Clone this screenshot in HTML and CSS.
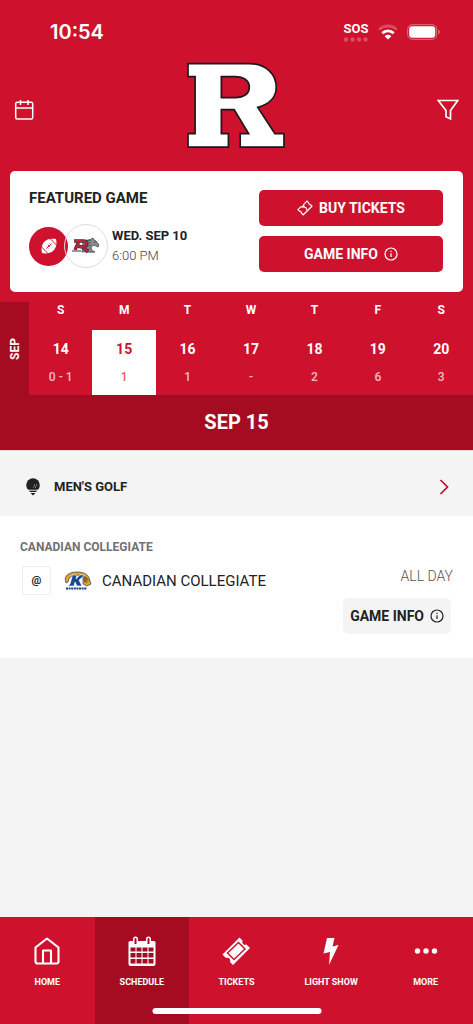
FILE: index.html
```html
<!DOCTYPE html>
<html lang="en">
<head>
    <meta charset="UTF-8">
    <meta name="viewport" content="width=device-width, initial-scale=1.0">
    <title>Schedule</title>
    <link rel="stylesheet" href="styles.css">
</head>
<body>

    <!-- Status bar -->
    <div class="status-bar">
        <span class="time">10:54</span>
        <div class="status-icons">
            <div class="sos">
                <span>SOS</span>
                <svg width="26" height="5" viewBox="0 0 26 5" fill="#fff" opacity="0.25"><circle cx="3" cy="2.5" r="2.2"/><circle cx="9.5" cy="2.5" r="2.2"/><circle cx="16" cy="2.5" r="2.2"/><circle cx="22.5" cy="2.5" r="2.2"/></svg>
            </div>
            <svg width="20" height="16" viewBox="0 0 20 16" fill="none" stroke="#fff" stroke-width="2.8">
                <path d="M1.2 5.6a12.5 12.5 0 0 1 17.6 0" opacity="0.25"/>
                <path d="M4.3 9.2a8.2 8.2 0 0 1 11.4 0"/>
                <path d="M10 15.6L6.7 12.2a4.7 4.7 0 0 1 6.6 0z" fill="#fff" stroke="none"/>
            </svg>
            <svg width="34" height="16" viewBox="0 0 34 16" fill="#fff">
                <rect x="0.7" y="0.7" width="29" height="14.6" rx="4.5" fill="none" stroke="#fff" stroke-opacity="0.4"/>
                <rect x="2.2" y="2.2" width="26" height="11.6" rx="3"/>
                <path d="M31.3 5.5c2 1 2 4 0 5z" opacity="0.4"/>
            </svg>
        </div>
    </div>

    <!-- Header -->
    <header class="header">
        <button class="icon-btn" aria-label="Calendar">
            <svg width="20" height="22" viewBox="0 0 20 22" fill="none" stroke="#fff" stroke-width="1.5">
                <rect x="1.7" y="3.3" width="17" height="16.7" rx="1.5"/>
                <path d="M1.7 9h17M6.5 1v5M14 1v5"/>
            </svg>
        </button>
        <svg class="logo" width="98" height="87" viewBox="25 25 291 255" role="img" aria-label="R">
            <path fill="#fff" fill-rule="evenodd" stroke="#191919" stroke-width="5" d="M28 28H210C260 28 290 60 290 98C290 128 268 149 235 158L286 236H313V276H183V236H208L165 165H127V236H148V276H28V236H49V67H28ZM127 67V129H168C194 129 210 117 210 98C210 79 194 67 168 67Z"/>
        </svg>
        <button class="icon-btn" aria-label="Filter">
            <svg width="22" height="22" viewBox="0 0 22 22" fill="none" stroke="#fff" stroke-width="1.7">
                <path d="M1.3 1.5h19.4L13.5 11.5V20L9 17.8V11.5z"/>
            </svg>
        </button>
    </header>

    <!-- Featured game -->
    <section class="featured">
        <div class="featured-info">
            <h2>Featured Game</h2>
            <div class="featured-row">
                <div class="sport-badge">
                    <svg width="16" height="16" viewBox="0 0 16 16">
                        <path d="M15 1C10 0 5.5 1 3 4S0 11 1 15c5 1 9.5 0 12-3s3-7 2-11z" fill="#fff"/>
                        <path d="M9 0.5L15.5 7M0.5 9L7 15.5M5.5 10.5l5-5M5.8 8.7l1.6 1.6M7.2 7.2l1.6 1.6M8.7 5.8l1.6 1.6" stroke="#ce112d" fill="none"/>
                    </svg>
                </div>
                <div class="team-badge">
                    <svg width="28" height="18" viewBox="0 0 28 18">
                        <path d="M11 5c3-3 7-1 10-4l1 2 2 1 3 4-1 2-4-2-3 2c0 3 2 4 4 5-5 1-9-1-13 0z" fill="#8a8c8e" stroke="#444" stroke-width="0.8"/>
                        <path d="M12 5l7-2M13 8l6-3M12 11l7-3M13 13l5-1" stroke="#444" stroke-width="0.7"/>
                        <circle cx="23" cy="5" r="0.6" fill="#222"/>
                        <path d="M2 4h9c5 0 5 5 0 6l5 5M7 4L3 13M5 9l5 1" fill="none" stroke="#333" stroke-width="3.4"/>
                        <path d="M2 4h9c5 0 5 5 0 6l5 5M7 4L3 13M5 9l5 1" fill="none" stroke="#bd2342" stroke-width="2"/>
                        <path d="M0 14h9" stroke="#777" stroke-width="1.5"/>
                    </svg>
                </div>
                <div class="when">
                    <strong>Wed. Sep 10</strong>
                    <span>6:00 PM</span>
                </div>
            </div>
        </div>
        <div class="featured-actions">
            <button class="btn btn-red">
                <svg width="16" height="16" viewBox="0 0 16 16" fill="none" stroke="#fff" stroke-width="1.2">
                    <path d="M10 1.2l1.7 1.7a1.5 1.5 0 0 0 1.7 1.7L15 6.3 6.2 14.8 4.5 13.2a1.5 1.5 0 0 0-1.8-1.8L1 9.7l3-3 2 .5.5-2.5z"/>
                    <path d="M6.5 5l.8 2 1.7.8 1 2.2"/>
                </svg>
                Buy Tickets
            </button>
            <button class="btn btn-red">
                Game Info
                <svg width="14" height="14" viewBox="0 0 14 14" fill="none" stroke="#fff" stroke-width="1.2"><circle cx="7" cy="7" r="6"/><path d="M7 6.3v3.7M7 3.8v1.2"/></svg>
            </button>
        </div>
    </section>

    <!-- Week -->
    <section class="week">
        <div class="month"><span>Sep</span></div>
        <div class="days">
            <button class="day"><span class="dow">S</span><span class="date"><b>14</b><small>0 - 1</small></span></button>
            <button class="day active"><span class="dow">M</span><span class="date"><b>15</b><small>1</small></span></button>
            <button class="day"><span class="dow">T</span><span class="date"><b>16</b><small>1</small></span></button>
            <button class="day"><span class="dow">W</span><span class="date"><b>17</b><small>-</small></span></button>
            <button class="day"><span class="dow">T</span><span class="date"><b>18</b><small>2</small></span></button>
            <button class="day"><span class="dow">F</span><span class="date"><b>19</b><small>6</small></span></button>
            <button class="day"><span class="dow">S</span><span class="date"><b>20</b><small>3</small></span></button>
        </div>
    </section>
    <h1 class="date-title">Sep 15</h1>

    <main class="content">
        <a class="sport-row" href="#golf">
            <svg width="14" height="18" viewBox="0 0 14 18">
                <circle cx="7" cy="7" r="6.8" fill="#222"/>
                <path d="M2 12.2h10M3 14.4h8" stroke="#f4f4f4" stroke-width="0.9"/>
                <path d="M3 13h8l-1 1H4zM4.5 15h5L7 17.5z" fill="#222"/>
                <path d="M8 7.2h.9M10.3 7h.9M9 9h.9M7 9.2h.6" stroke="#fff" stroke-width="0.9"/>
            </svg>
            <span>Men's Golf</span>
            <svg class="chevron" width="10" height="16" viewBox="0 0 10 16" fill="none" stroke="#b51029" stroke-width="1.7"><path d="M1.5 1l7 7-7 7"/></svg>
        </a>

        <article class="event" id="golf">
            <h3>Canadian Collegiate</h3>
            <div class="event-row">
                <span class="at">@</span>
                <svg width="28" height="20" viewBox="0 0 28 20">
                    <path d="M2 12C-1 5 5 1 13 1c8 0 12 3 13 9l1 3-4 2-4-2V6C14 3 5 3 4 11z" fill="#dda52c" stroke="#263b68" stroke-width="0.7"/>
                    <path d="M19 5c3 0 5 2 6 5l-3-1 2 3-4-1z" fill="#82652c"/>
                    <path d="M8 4h5l-1 4 4-4h5l-6 5 3 6h-5l-2-4-1 4H4l2-2 2-7z" fill="#174a91" stroke="#fff" stroke-width="0.6"/>
                    <path d="M2 17.5h21" stroke="#153f83" stroke-width="2.2" stroke-dasharray="2 0.6"/>
                </svg>
                <span class="event-name">Canadian Collegiate</span>
                <span class="event-time">All Day</span>
            </div>
            <button class="btn btn-gray">
                Game Info
                <svg width="14" height="14" viewBox="0 0 14 14" fill="none" stroke="#222" stroke-width="1.2"><circle cx="7" cy="7" r="6"/><path d="M7 6.3v3.7M7 3.8v1.2"/></svg>
            </button>
        </article>
    </main>

    <!-- Bottom tabs -->
    <nav class="tabs">
        <a class="tab" href="#home">
            <svg width="30" height="30" viewBox="0 0 30 30" fill="none" stroke="#fff" stroke-width="2.1" stroke-linejoin="round">
                <path d="M3.5 11.5L15 2.5l11.5 9v14a2 2 0 0 1-2 2h-19a2 2 0 0 1-2-2z"/><path d="M11 27V14.5h8V27"/>
            </svg>
            <span>Home</span>
        </a>
        <a class="tab active" href="#schedule">
            <svg width="30" height="30" viewBox="0 0 30 30">
                <path fill="#fff" fill-rule="evenodd" d="M3 5h3V3a2.5 2.5 0 0 1 5 0v2h8V3a2.5 2.5 0 0 1 5 0v2h3a1.5 1.5 0 0 1 1.5 1.5V28a2 2 0 0 1-2 2h-23a2 2 0 0 1-2-2V6.5A1.5 1.5 0 0 1 3 5zM7.5 3v5h2V3a1 1 0 0 0-2 0zM20.5 3v5h2V3a1 1 0 0 0-2 0z"/>
                <path d="M3.5 11.5h5v4h-5zM9.5 11.5h5v4h-5zM15.5 11.5h5v4h-5zM21.5 11.5h5v4h-5zM3.5 17h5v4.5h-5zM9.5 17h5v4.5h-5zM15.5 17h5v4.5h-5zM21.5 17h5v4.5h-5zM3.5 23h5v4.5h-5zM9.5 23h5v4.5h-5zM15.5 23h5v4.5h-5zM21.5 23h5v4.5h-5z" fill="#a50c22"/>
            </svg>
            <span>Schedule</span>
        </a>
        <a class="tab" href="#tickets">
            <svg width="30" height="30" viewBox="0 0 30 30">
                <path fill="#fff" d="M18.5 1.5l3 3a3 3 0 0 0 4 4l3.5 3.5-17 17-3-3a3 3 0 0 0-4-4L1.5 18.5z"/>
                <path d="M17.5 6.5l6.5 6.5L13 23.5 6.5 17z" fill="none" stroke="#ce112d" stroke-width="1.5"/>
            </svg>
            <span>Tickets</span>
        </a>
        <a class="tab" href="#lightshow">
            <svg width="30" height="30" viewBox="0 0 30 30"><path d="M11 2h7.5l-2 8.5 6-1.5L13 29l1-13-6.5 1.5z" fill="#fff"/></svg>
            <span>Light Show</span>
        </a>
        <a class="tab" href="#more">
            <svg width="30" height="30" viewBox="0 0 30 30" fill="#fff"><circle cx="6.5" cy="15" r="2.7"/><circle cx="15" cy="15" r="2.7"/><circle cx="23.5" cy="15" r="2.7"/></svg>
            <span>More</span>
        </a>
        <div class="home-indicator"></div>
    </nav>

</body>
</html>
```
FILE: styles.css
```css
* {
    box-sizing: border-box;
}

body {
    margin: 0;
    min-height: 100vh;
    display: flex;
    flex-direction: column;
    background-color: #ce112d;
    color: #222;
    font-family: Roboto, "Liberation Sans", sans-serif;
}

h1, h2, h3 {
    margin: 0;
}

button {
    border: none;
    padding: 0;
    background: none;
    color: inherit;
    font-family: inherit;
    cursor: pointer;
}

a {
    color: inherit;
    text-decoration: none;
}

svg {
    display: block;
    flex-shrink: 0;
}

/* Status bar */
.status-bar {
    height: 62px;
    padding: 2px 32px 0 50px;
    display: flex;
    align-items: center;
    justify-content: space-between;
    color: #fff;
}

.time {
    font-family: Inter, sans-serif;
    font-size: 20px;
    font-weight: 600;
}

.status-icons {
    display: flex;
    align-items: center;
    gap: 9px;
}

.sos {
    display: flex;
    flex-direction: column;
    align-items: center;
    gap: 1px;
    font-size: 13px;
    line-height: 14px;
    font-weight: bold;
}

/* Header */
.header {
    height: 109px;
    padding: 0 14px 14px;
    display: flex;
    align-items: center;
    justify-content: space-between;
}

.logo {
    margin-bottom: 8px;
}

/* Featured game */
.featured {
    margin: 0 10px 10px;
    padding: 19px 20px 20px 19px;
    display: flex;
    justify-content: space-between;
    background-color: #fff;
    border-radius: 5px;
}

.featured h2 {
    margin-bottom: 18px;
    font-size: 15px;
    line-height: 16px;
    text-transform: uppercase;
}

.featured-row {
    display: flex;
    align-items: center;
}

.sport-badge, .team-badge {
    display: flex;
    align-items: center;
    justify-content: center;
    border-radius: 50%;
}

.sport-badge {
    width: 39px;
    height: 39px;
    background-color: #ce112d;
}

.team-badge {
    width: 44px;
    height: 44px;
    margin-left: -4px;
    border: 1px solid #ddd;
}

.when {
    margin-left: 4px;
    display: flex;
    flex-direction: column;
    font-size: 13px;
    line-height: 20px;
    white-space: nowrap;
}

.when strong {
    text-transform: uppercase;
}

.when span {
    color: #444;
    font-weight: 300;
}

.featured-actions {
    width: 184px;
    display: flex;
    flex-direction: column;
    gap: 10px;
}

.btn {
    height: 36px;
    display: flex;
    align-items: center;
    justify-content: center;
    gap: 6px;
    border-radius: 5px;
    font-size: 14px;
    font-weight: bold;
    text-transform: uppercase;
    white-space: nowrap;
}

.btn-red {
    background-color: #ce112d;
    color: #fff;
}

.btn-gray {
    padding: 0 7px;
    margin-left: auto;
    background-color: #f4f4f4;
    color: #222;
}

/* Week */
.week {
    height: 93px;
    display: flex;
    color: #fff;
}

.month {
    width: 29px;
    display: flex;
    align-items: center;
    justify-content: center;
    background-color: #a50c22;
    font-size: 12px;
    font-weight: bold;
    text-transform: uppercase;
}

.month span {
    writing-mode: vertical-rl;
    transform: rotate(180deg);
}

.days {
    flex: 1;
    display: grid;
    grid-template-columns: repeat(7, 1fr);
}

.day {
    display: flex;
    flex-direction: column;
}

.dow {
    width: 100%;
    height: 28px;
    font-size: 12px;
    line-height: 16px;
    font-weight: bold;
}

.date {
    width: 100%;
    flex: 1;
    padding-top: 10px;
    display: flex;
    flex-direction: column;
    gap: 10px;
}

.date b {
    font-size: 14px;
    line-height: 18px;
}

.date small {
    font-size: 12px;
    line-height: 18px;
    font-weight: 500;
    opacity: 0.7;
}

.day.active .date {
    background-color: #fff;
    color: #ce112d;
}

.date-title {
    padding: 14px 0;
    background-color: #a50c22;
    color: #fff;
    font-size: 20px;
    line-height: 27px;
    text-align: center;
    text-transform: uppercase;
}

/* Content */
.content {
    flex: 1;
    background-color: #f4f4f4;
}

.sport-row {
    height: 66px;
    padding: 6px 24px 0 26px;
    display: flex;
    align-items: center;
    gap: 14px;
    border-top: 1px solid #ead6d9;
    font-size: 13px;
    font-weight: bold;
    text-transform: uppercase;
}

.chevron {
    margin-left: auto;
}

.event {
    padding: 22px 20px 24px;
    background-color: #fff;
}

.event h3 {
    color: #707070;
    font-size: 12px;
    line-height: 18px;
    text-transform: uppercase;
}

.event-row {
    padding: 10px 0 3px 2px;
    display: flex;
    align-items: center;
    text-transform: uppercase;
}

.at {
    width: 29px;
    height: 29px;
    margin-right: 13px;
    border: 1px solid #eee;
    border-radius: 2px;
    font-size: 11px;
    line-height: 27px;
    font-weight: bold;
    text-align: center;
}

.event-name {
    margin-left: 10px;
    font-size: 15px;
}

.event-time {
    margin: 0 0 10px auto;
    color: #555;
    font-size: 14px;
    font-weight: 300;
}

.event .btn {
    margin-right: 2px;
}

/* Bottom tabs */
.tabs {
    position: relative;
    height: 107px;
    display: grid;
    grid-template-columns: repeat(5, 1fr);
    color: #fff;
}

.tab {
    padding-top: 19px;
    display: flex;
    flex-direction: column;
    align-items: center;
    gap: 8px;
    font-size: 9px;
    line-height: 16px;
    font-weight: bold;
    text-transform: uppercase;
}

.tab.active {
    background-color: #a50c22;
}

.home-indicator {
    position: absolute;
    left: 50%;
    bottom: 10px;
    width: 169px;
    height: 6px;
    border-radius: 3px;
    background-color: #fff;
    transform: translateX(-50%);
}
```
